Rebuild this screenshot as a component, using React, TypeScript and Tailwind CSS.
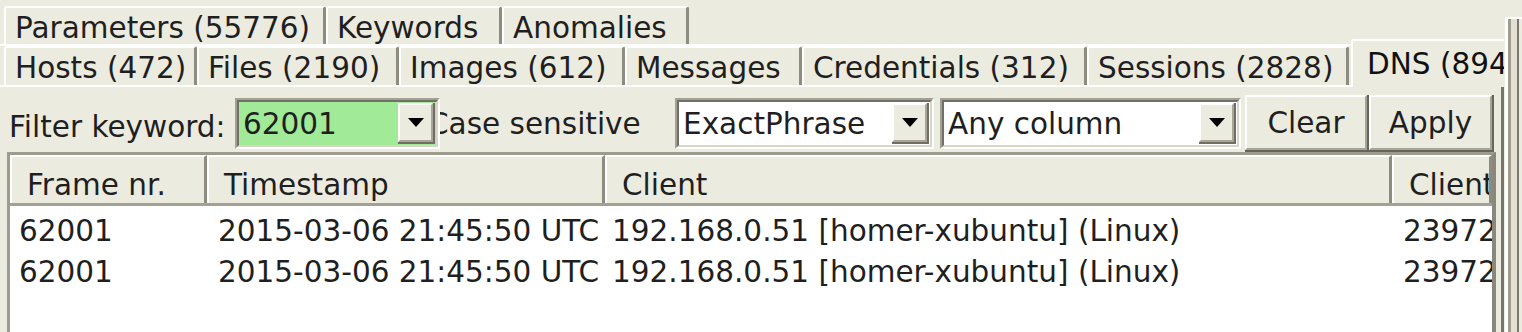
import { ReactNode } from 'react';

const TOP_TABS = [
  { label: 'Parameters (55776)', cls: 'w-[322px]' },
  { label: 'Keywords', cls: 'w-[176px]' },
  { label: 'Anomalies', cls: 'w-[187px]' },
];

const BOTTOM_TABS = [
  { label: 'Hosts (472)', cls: 'w-[193px]' },
  { label: 'Files (2190)', cls: 'w-[202px]' },
  { label: 'Images (612)', cls: 'w-[226px]' },
  { label: 'Messages', cls: 'w-[177px]' },
  { label: 'Credentials (312)', cls: 'w-[285px]' },
  { label: 'Sessions (2828)', cls: 'w-[262px]' },
];

const COLUMNS = [
  { label: 'Frame nr.', cls: 'w-[197px]', cell: 'pl-[9px]' },
  { label: 'Timestamp', cls: 'w-[398px]', cell: 'pl-[11px]' },
  { label: 'Client', cls: 'w-[787px]', cell: 'pl-[7px]' },
  { label: 'Client', cls: 'flex-1', cell: 'pl-[11px]' },
];

const ROWS = [
  ['62001', '2015-03-06 21:45:50 UTC', '192.168.0.51 [homer-xubuntu] (Linux)', '23972'],
  ['62001', '2015-03-06 21:45:50 UTC', '192.168.0.51 [homer-xubuntu] (Linux)', '23972'],
];

const Tab = ({ label, cls }: { label: string; cls: string }) => (
  <div
    className={`${cls} h-full shrink-0 flex items-center pl-[9px] pt-[5px] border-t-2 border-l-2 border-r-[3px] border-t-white border-l-white border-r-[#8e8c81] rounded-tl-[3px] rounded-tr-[3px] whitespace-nowrap overflow-hidden`}
  >
    {label}
  </div>
);

const DropArrow = () => (
  <div className="w-[37px] h-full shrink-0 border-r-[2px] border-b-[2px] border-r-[#6f6d64] border-b-[#6f6d64]">
    <div className="w-full h-full flex items-center justify-center bg-[#ecebdf] border-t-2 border-l-2 border-r-2 border-b-2 border-t-white border-l-white border-r-[#a9a699] border-b-[#a9a699]">
      <svg width="16" height="9" viewBox="0 0 16 9">
        <polygon points="0,0 16,0 8,9" fill="#000" />
      </svg>
    </div>
  </div>
);

const Combo = ({ value, cls, bg }: { value: string; cls: string; bg: string }) => (
  <div
    className={`${cls} h-[51px] shrink-0 border-2 border-t-[#a3a094] border-l-[#a3a094] border-r-white border-b-white`}
  >
    <div
      className={`${bg} w-full h-full flex items-stretch border-2 border-t-[#716f66] border-l-[#716f66] border-r-[#d9d6c9] border-b-[#d9d6c9]`}
    >
      <div className="flex-1 flex items-center pl-[4px] pt-[4px] whitespace-nowrap overflow-hidden">{value}</div>
      <div className="py-[1px] pr-[1px]">
        <DropArrow />
      </div>
    </div>
  </div>
);

const Button = ({ children, cls }: { children: ReactNode; cls: string }) => (
  <div className={`${cls} h-[57px] shrink-0 border-r-2 border-b-2 border-r-[#66645b] border-b-[#66645b]`}>
    <div className="w-full h-full flex items-center justify-center pt-[4px] bg-[#ecebdf] border-t-2 border-l-2 border-r-2 border-b-2 border-t-white border-l-white border-r-[#a7a497] border-b-[#a7a497]">
      {children}
    </div>
  </div>
);

export default function App() {
  return (
    <div
      className="w-[1522px] h-[332px] overflow-hidden bg-[#ecebdf] text-[#1f1f1f] text-[29.5px] leading-[1.2] flex"
      style={{ fontFamily: '"DejaVu Sans", "Liberation Sans", sans-serif' }}
    >
      {/* Main tab control */}
      <div className="w-[1504px] shrink-0 flex flex-col overflow-hidden">
        {/* Upper tab row */}
        <div className="h-[44px] pt-[6px] pl-[4px] flex shrink-0">
          {TOP_TABS.map((t) => (
            <Tab key={t.label} label={t.label} cls={t.cls} />
          ))}
        </div>

        {/* Lower tab row */}
        <div className="h-[41px] pl-[4px] flex items-end shrink-0 border-t-2 border-t-white">
          {BOTTOM_TABS.map((t) => (
            <Tab key={t.label} label={t.label} cls={t.cls} />
          ))}
          <div className="w-[160px] h-[48px] shrink-0 -mb-[2px] relative z-10 bg-[#ecebdf] flex items-center pl-[14px] pt-[2px] ml-[2px] border-t-2 border-l-2 border-t-white border-l-white rounded-tl-[3px] whitespace-nowrap overflow-hidden text-[#111]">
            DNS (894)
          </div>
        </div>

        {/* Tab page */}
        <div className="flex-1 flex flex-col border-t-2 border-t-white border-r-[3px] border-r-[#77756c]">
          {/* Filter bar */}
          <div className="h-[65px] pt-[7px] flex items-center shrink-0">
            <div className="w-[235px] shrink-0 pl-[9px] pt-[10px] whitespace-nowrap">Filter keyword:</div>
            <Combo value="62001" cls="w-[205px]" bg="bg-[#a0ea98]" />
            <div className="w-[235px] shrink-0 pt-[3px] overflow-hidden whitespace-nowrap">
              <span className="block -ml-[12px]">Case sensitive</span>
            </div>
            <Combo value="ExactPhrase" cls="w-[259px]" bg="bg-white" />
            <div className="w-[6px] shrink-0" />
            <Combo value="Any column" cls="w-[301px]" bg="bg-white" />
            <div className="w-[4px] shrink-0" />
            <Button cls="w-[124px]">Clear</Button>
            <Button cls="w-[125px]">Apply</Button>
          </div>

          {/* List view */}
          <div className="flex-1 ml-[7px] mr-[5px] flex flex-col border-t-[3px] border-l-[3px] border-r-[4px] border-t-[#9d9a8e] border-l-[#9d9a8e] border-r-[#8a887d] overflow-hidden">
            <div className="h-[51px] flex shrink-0 border-b-[3px] border-b-[#a3a094]">
              {COLUMNS.map((c, i) => (
                <div
                  key={i}
                  className={`${c.cls} shrink-0 h-full flex items-center pl-[15px] pt-[12px] whitespace-nowrap overflow-hidden border-t-2 border-l-2 border-r-[3px] border-t-white border-l-white border-r-[#8e8c81]`}
                >
                  {c.label}
                </div>
              ))}
            </div>
            <div className="flex-1 bg-white pt-[5px]">
              {ROWS.map((r, ri) => (
                <div key={ri} className="h-[41px] flex items-center">
                  {r.map((v, ci) => (
                    <div
                      key={ci}
                      className={`${COLUMNS[ci].cls} ${COLUMNS[ci].cell} shrink-0 whitespace-nowrap overflow-hidden`}
                    >
                      {v}
                    </div>
                  ))}
                </div>
              ))}
            </div>
          </div>
        </div>
      </div>

      {/* Side panel edge */}
      <div className="flex-1 mt-[17px] ml-[1px] border-t-2 border-l-[3px] border-t-white border-l-white flex">
        <div className="w-[3px] bg-[#9e9b8f]" />
        <div className="w-[6px] bg-[#e3e0d3]" />
        <div className="w-[2px] bg-[#7a786e]" />
        <div className="flex-1" />
      </div>
    </div>
  );
}
